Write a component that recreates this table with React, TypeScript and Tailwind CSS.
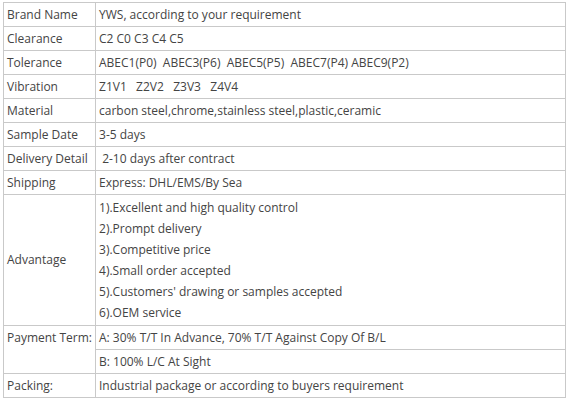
import React from "react";

const rows: [string, string][] = [
  ["Brand Name", "YWS, according to your requirement"],
  ["Clearance", "C2 C0 C3 C4 C5"],
  ["Tolerance", "ABEC1(P0)\u00a0 ABEC3(P6)\u00a0 ABEC5(P5)\u00a0 ABEC7(P4) ABEC9(P2)"],
  ["Vibration", "Z1V1\u00a0\u00a0 Z2V2\u00a0\u00a0 Z3V3\u00a0\u00a0 Z4V4"],
  ["Material", "carbon steel,chrome,stainless steel,plastic,ceramic"],
  ["Sample Date", "3-5 days"],
  ["Delivery Detail", "\u00a02-10 days after contract"],
  ["Shipping", "Express: DHL/EMS/By Sea"],
];

const adv = [
  "1).Excellent and high quality control",
  "2).Prompt delivery",
  "3).Competitive price",
  "4).Small order accepted",
  "5).Customers' drawing or samples accepted",
  "6).OEM service",
];

const td = "border border-[#c9c9c9] px-[3px] py-0 h-[24px] align-middle whitespace-nowrap";

export default function App() {
  return (
    <div className="w-[572px] h-[400px] bg-white pt-[2px] pl-[3px]" style={{ fontFamily: '"Open Sans", "Noto Sans", sans-serif' }}>
      <table className="border-collapse text-[12px] text-[#444] leading-[16px] w-[563px]">
        <colgroup>
          <col className="w-[90px]" />
          <col />
        </colgroup>
        <tbody>
          {rows.map(([k, v]) => (
            <tr key={k}>
              <td className={td}>{k}</td>
              <td className={td}>{v}</td>
            </tr>
          ))}
          <tr>
            <td className="border border-[#c9c9c9] px-[3px] align-middle whitespace-nowrap">Advantage</td>
            <td className="border border-[#c9c9c9] px-[3px] pt-[2px] pb-[2px] whitespace-nowrap">
              {adv.map((a) => (
                <div key={a} className="h-[21px] leading-[21px]">{a}</div>
              ))}
            </td>
          </tr>
          <tr>
            <td rowSpan={2} className="border border-[#c9c9c9] px-[3px] align-top whitespace-nowrap pt-[4px]">Payment Term:</td>
            <td className={td}>A: 30% T/T In Advance, 70% T/T Against Copy Of B/L</td>
          </tr>
          <tr>
            <td className={td}>B: 100% L/C At Sight</td>
          </tr>
          <tr>
            <td className={td}>Packing:</td>
            <td className={td}>Industrial package or according to buyers requirement</td>
          </tr>
        </tbody>
      </table>
    </div>
  );
}
